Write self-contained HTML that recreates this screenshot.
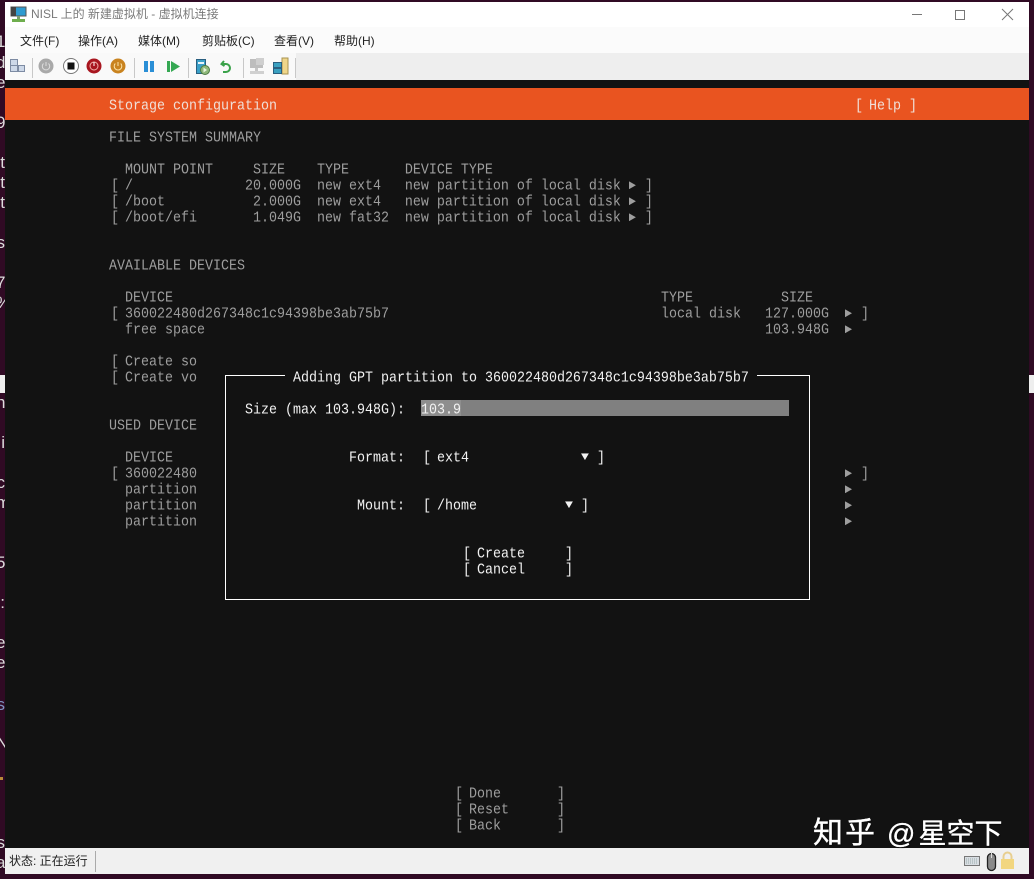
<!DOCTYPE html>
<html><head><meta charset="utf-8"><style>
html,body{margin:0;padding:0;width:1034px;height:879px;overflow:hidden;background:#300a24}
*{box-sizing:border-box}
#w{position:absolute;left:0;top:0;width:1034px;height:879px;overflow:hidden;background:#300a24}
.a{position:absolute}
#strip span{position:absolute;left:-4px;font:17px "Liberation Sans",sans-serif;color:#ddd;line-height:20px;width:9px;text-align:right;display:block}
#strip{position:absolute;left:0;top:0;width:5px;height:879px;overflow:hidden}
.ui{font:12px/16px "Liberation Sans","Noto Sans CJK SC",sans-serif;color:#222;white-space:pre}
pre{position:absolute;margin:0;height:16px;font:13.33px/16px "Liberation Mono",monospace;white-space:pre;transform:scaleY(1.14);transform-origin:0 50%;color:#9e9e9e}
pre.w{color:#f2f2f2}
pre b{font-weight:normal;position:relative;left:2px}
i.r{display:inline-block;width:7px;height:7px;margin:0 1px 0 0;vertical-align:0;background:currentColor;clip-path:polygon(0 0,100% 50%,0 100%)}
i.d{display:inline-block;width:8px;height:6px;vertical-align:1px;background:currentColor;clip-path:polygon(0 0,100% 0,50% 100%)}
.wm{position:absolute;top:814px;line-height:40px;font-family:'Liberation Sans','Noto Sans CJK SC',sans-serif;color:#fff;white-space:pre;text-shadow:1px 1px 1px rgba(0,0,0,.5);-webkit-text-stroke:.35px #fff}
</style></head><body><div id="w">
<div id="strip">
<span style="top:32px">1</span><span style="top:53px">d</span><span style="top:73px">e</span><span style="top:113px">9</span><span style="top:153px">t</span><span style="top:173px">t</span><span style="top:193px">t</span><span style="top:233px">s</span><span style="top:273px">7</span><span style="top:293px">%</span><span style="top:393px">n</span><span style="top:433px">i</span><span style="top:473px">c</span><span style="top:493px">m</span><span style="top:553px">5</span><span style="top:593px">:</span><span style="top:633px">e</span><span style="top:653px">e</span><span style="top:695px;color:#7f93c0">s</span><span style="top:733px">N</span><span style="top:833px">s</span><span style="top:853px">a</span>
</div>
<div class="a" style="left:0;top:375px;width:5px;height:18px;background:#eee"></div>
<div class="a" style="left:0;top:777px;width:3px;height:3px;background:#b98a3a"></div>
<div class="a" style="left:1029px;top:375px;width:5px;height:18px;background:#eee"></div>

<div class="a" style="left:5px;top:2px;width:1024px;height:25px;background:#fff"></div>
<div class="a" style="left:5px;top:27px;width:1024px;height:26px;background:#fbfbfb"></div>
<div class="a" style="left:5px;top:53px;width:1024px;height:27px;background:#eeeeee"></div>
<div class="a" style="left:5px;top:53px;width:291px;height:27px;background:#f9f9f9"></div>
<div class="a" style="left:5px;top:80px;width:1024px;height:768px;background:#121212"></div>
<div class="a" style="left:5px;top:88px;width:1024px;height:32px;background:#e95420"></div>

<!-- title bar -->
<svg class="a" style="left:10px;top:6px" width="17" height="17" viewBox="0 0 17 17"><rect x="1" y="1" width="15" height="9" fill="#2f9bd0" stroke="#555"/><rect x="1" y="1" width="5" height="9" fill="#444"/><rect x="7" y="10" width="3" height="3" fill="#7a9a70"/><rect x="2" y="13" width="13" height="3" fill="#6fae4e"/></svg>
<div class="a ui" style="left:31px;top:6px;color:#7a7a7a">NISL 上的 新建虚拟机 - 虚拟机连接</div>
<svg class="a" style="left:905px;top:5px" width="115" height="20" viewBox="0 0 115 20" fill="none" stroke="#777" stroke-width="1"><path d="M7 9.5h10"/><rect x="50.5" y="5.5" width="9" height="9"/><path d="M97 4l11 11M108 4L97 15"/></svg>

<!-- menu -->
<div class="a ui" style="left:20px;top:33px">文件(F)</div>
<div class="a ui" style="left:78px;top:33px">操作(A)</div>
<div class="a ui" style="left:138px;top:33px">媒体(M)</div>
<div class="a ui" style="left:202px;top:33px">剪贴板(C)</div>
<div class="a ui" style="left:274px;top:33px">查看(V)</div>
<div class="a ui" style="left:334px;top:33px">帮助(H)</div>

<!-- toolbar -->
<svg class="a" style="left:0;top:53px" width="300" height="27" viewBox="0 0 300 27">
<g fill="#cdd8e8" stroke="#7d8ba3"><rect x="10.5" y="6.5" width="7" height="6"/><rect x="10.5" y="12.5" width="7" height="6"/><rect x="18.5" y="12.5" width="6" height="6"/></g>
<g fill="#c8c8c8"><rect x="32" y="5" width="1" height="20"/><rect x="134" y="5" width="1" height="20"/><rect x="188" y="5" width="1" height="20"/><rect x="243" y="5" width="1" height="20"/><rect x="295" y="5" width="1" height="20"/></g>
<circle cx="46" cy="13" r="7.5" fill="#a9a9a9"/><path d="M46 9v4M43.5 10.5a3.7 3.7 0 1 0 5 0" fill="none" stroke="#ddd" stroke-width="1"/>
<circle cx="71" cy="13" r="7.5" fill="#fff" stroke="#777"/><rect x="67.5" y="9.5" width="7" height="7" fill="#111"/>
<circle cx="94" cy="13" r="7.5" fill="#a8161f"/><circle cx="94" cy="13" r="4" fill="none" stroke="#f2b0a8" stroke-width="1"/><path d="M94 9v4" stroke="#fff"/>
<circle cx="118" cy="13" r="7.5" fill="#c9831f"/><path d="M118 9v4M115.3 10.5a3.8 3.8 0 1 0 5.4 0" fill="none" stroke="#fbe3a8" stroke-width="1"/>
<rect x="144" y="8" width="4" height="11" fill="#2b8fd6"/><rect x="150" y="8" width="4" height="11" fill="#2b8fd6"/>
<rect x="167" y="8" width="3" height="11" fill="#35a853"/><path d="M171 8l9 5.5-9 5.5z" fill="#35a853"/>
<rect x="196.500" y="6.500" width="9" height="14" fill="#3aa0c8" stroke="#2a5f80"/><rect x="198" y="9" width="6" height="2" fill="#e8f4fa"/><circle cx="205" cy="17" r="4.500" fill="#8fb87a" stroke="#4d7a44"/><path d="M203.500 14.500l3.500 2.500-3.500 2.500z" fill="#e8f5df"/>
<path d="M224 8l-2.500 3 3 2M222 11h4a4 4 0 0 1 0 8h-3" fill="none" stroke="#3aa24a" stroke-width="2"/>
<rect x="250" y="6" width="13" height="9" fill="#bdbdbd"/><rect x="256" y="5" width="8" height="7" fill="#cfcfcf"/><rect x="255" y="15" width="3" height="3" fill="#c5c5c5"/><rect x="250" y="18" width="14" height="3" fill="#d0d0d0"/>
<rect x="282" y="5" width="6" height="16" fill="#efd68a" stroke="#a89350"/><rect x="273.500" y="9.500" width="8" height="5" fill="#3aa0c0" stroke="#2a5f80"/><rect x="273.500" y="15.500" width="8" height="5" fill="#3aa0c0" stroke="#2a5f80"/>
</svg>

<!-- terminal -->
<pre style="left:109px;top:99px;color:#f0e0d8">Storage configuration</pre>
<pre style="left:853px;top:99px;color:#f0e0d8"><b>[</b> Help ]</pre>

<pre style="left:109px;top:131px">FILE SYSTEM SUMMARY</pre>
<pre style="left:125px;top:163px">MOUNT POINT     SIZE    TYPE       DEVICE TYPE</pre>
<pre style="left:109px;top:179px"><b>[</b> /              20.000G  new ext4   new partition of local disk <i class="r"></i> ]</pre>
<pre style="left:109px;top:195px"><b>[</b> /boot           2.000G  new ext4   new partition of local disk <i class="r"></i> ]</pre>
<pre style="left:109px;top:211px"><b>[</b> /boot/efi       1.049G  new fat32  new partition of local disk <i class="r"></i> ]</pre>

<pre style="left:109px;top:259px">AVAILABLE DEVICES</pre>
<pre style="left:125px;top:291px">DEVICE</pre>
<pre style="left:661px;top:291px">TYPE</pre>
<pre style="left:781px;top:291px">SIZE</pre>
<pre style="left:109px;top:307px"><b>[</b> 360022480d267348c1c94398be3ab75b7</pre>
<pre style="left:661px;top:307px">local disk   127.000G  <i class="r"></i> ]</pre>
<pre style="left:125px;top:323px">free space</pre>
<pre style="left:765px;top:323px">103.948G  <i class="r"></i></pre>

<pre style="left:109px;top:355px"><b>[</b> Create so</pre>
<pre style="left:109px;top:371px"><b>[</b> Create vo</pre>

<pre style="left:109px;top:419px">USED DEVICE</pre>
<pre style="left:125px;top:451px">DEVICE</pre>
<pre style="left:109px;top:467px"><b>[</b> 360022480</pre>
<pre style="left:845px;top:467px"><i class="r"></i> ]</pre>
<pre style="left:125px;top:483px">partition</pre>
<pre style="left:845px;top:483px"><i class="r"></i></pre>
<pre style="left:125px;top:499px">partition</pre>
<pre style="left:845px;top:499px"><i class="r"></i></pre>
<pre style="left:125px;top:515px">partition</pre>
<pre style="left:845px;top:515px"><i class="r"></i></pre>

<pre style="left:453px;top:787px"><b>[</b> Done       ]</pre>
<pre style="left:453px;top:803px"><b>[</b> Reset      ]</pre>
<pre style="left:453px;top:819px"><b>[</b> Back       ]</pre>

<!-- dialog -->
<div class="a" style="left:225px;top:375px;width:585px;height:225px;background:#121212;border:1px solid #fff"></div>
<div class="a" style="left:285px;top:370px;width:472px;height:12px;background:#121212"></div>
<div class="a" style="left:421px;top:400px;width:368px;height:16px;background:#808080"></div>
<div class="a" style="left:421px;top:400px;width:40px;height:16px;background:#8e8e8e"></div>
<pre class="w" style="left:293px;top:371px">Adding GPT partition to 360022480d267348c1c94398be3ab75b7</pre>
<pre class="w" style="left:245px;top:403px">Size (max 103.948G):  103.9</pre>
<pre class="w" style="left:349px;top:451px">Format:  <b>[</b> ext4              <i class="d"></i> ]</pre>
<pre class="w" style="left:357px;top:499px">Mount:  <b>[</b> /home           <i class="d"></i> ]</pre>
<pre class="w" style="left:461px;top:547px"><b>[</b> Create     ]</pre>
<pre class="w" style="left:461px;top:563px"><b>[</b> Cancel     ]</pre>

<!-- status bar -->
<div class="a" style="left:5px;top:848px;width:1024px;height:26px;background:#f0f0f0"></div>
<div class="a ui" style="left:9px;top:853px">状态: 正在运行</div>
<div class="a" style="left:95px;top:851px;width:1px;height:21px;background:#aaa"></div>
<svg class="a" style="left:960px;top:850px" width="60" height="24" viewBox="0 0 60 24">
<rect x="4.500" y="6.500" width="15" height="9" fill="#d8dde2" stroke="#777"/><path d="M6 9h12M6 11h12M6 13h12" stroke="#9aa" stroke-dasharray="1 1"/>
<rect x="27.500" y="3.500" width="8" height="17" rx="4" fill="#8a8a8a" stroke="#222" stroke-width="1.300"/><path d="M31.500 1v7" stroke="#ddd"/>
<rect x="41" y="9" width="13" height="10" fill="#f2d680"/><path d="M43.500 9V6.500a4 4 0 0 1 8 0V9" fill="none" stroke="#e8cf90" stroke-width="2"/>
</svg>

<!-- watermark -->
<div class="wm" style="left:813px;font-size:30px;letter-spacing:2px">知乎</div>
<div class="wm" style="left:887px;font-size:28px"><span style="margin-right:3px">@</span>星空下</div>
</div></body></html>
